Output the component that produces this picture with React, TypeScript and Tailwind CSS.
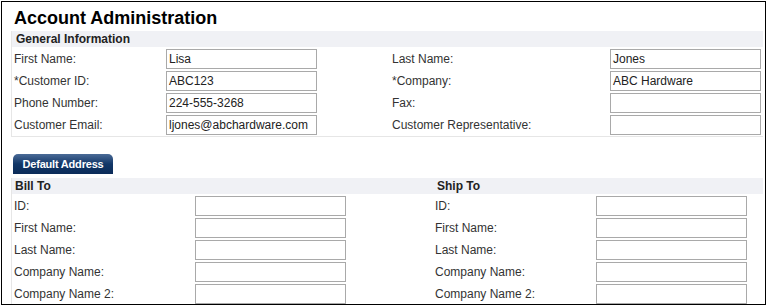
const general = [
  { l: 'First Name:', v: 'Lisa', rl: 'Last Name:', rv: 'Jones' },
  { l: '*Customer ID:', v: 'ABC123', rl: '*Company:', rv: 'ABC Hardware' },
  { l: 'Phone Number:', v: '224-555-3268', rl: 'Fax:', rv: '' },
  { l: 'Customer Email:', v: 'ljones@abchardware.com', rl: 'Customer Representative:', rv: '' },
];

const addressFields = ['ID:', 'First Name:', 'Last Name:', 'Company Name:', 'Company Name 2:'];

function Field({ value }: { value: string }) {
  return (
    <div className="h-[20px] w-[151px] border border-[#a9a9a9] bg-white pl-[2px] text-[12px] leading-[18px] text-[#222]">
      {value}
    </div>
  );
}

export default function App() {
  return (
    <div
      className="w-[768px] h-[308px] bg-white pt-[1px] pl-[1px] text-[#333]"
      style={{ fontFamily: '"Liberation Sans", Arial, sans-serif' }}
    >
      <div className="w-[765px] h-[304px] border border-black overflow-hidden pl-[9px] pt-[5px]">
        <h1 className="pl-[3px] text-[18px] leading-[22px] font-bold text-black">Account Administration</h1>

        {/* General information */}
        <div className="mt-[2px] w-[752px] border-l border-b border-[#e6e6e6]">
          <div className="h-[16px] bg-[#f0f1f5] pl-[4px] text-[12px] leading-[16px] font-bold text-[#222]">
            General Information
          </div>
          <div className="flex flex-col gap-[2px] pt-[2px] pb-[1px]">
            {general.map((r) => (
              <div key={r.l} className="flex items-center text-[12px]">
                <span className="w-[154px] pl-[2px]">{r.l}</span>
                <Field value={r.v} />
                <span className="w-[293px] pl-[75px]">{r.rl}</span>
                <Field value={r.rv} />
              </div>
            ))}
          </div>
        </div>

        {/* Default address tab */}
        <div className="mt-[17px] ml-[2px] h-[20px] w-[100px] rounded-t-[5px] bg-gradient-to-b from-[#4a6b97] via-[#123768] to-[#0b2b58] text-center text-[11px] leading-[21px] font-bold text-white tracking-[-0.2px]">
          Default Address
        </div>

        <div className="mt-[4px] w-[752px] border-l border-[#e6e6e6]">
          <div className="flex h-[16px] bg-[#f0f1f5] text-[12px] leading-[16px] font-bold text-[#222]">
            <span className="w-[425px] pl-[3px]">Bill To</span>
            <span>Ship To</span>
          </div>
          <div className="flex flex-col gap-[2px] pt-[2px]">
            {addressFields.map((f) => (
              <div key={f} className="flex items-center text-[12px]">
                <span className="w-[183px] pl-[2px]">{f}</span>
                <Field value="" />
                <span className="w-[250px] pl-[89px]">{f}</span>
                <Field value="" />
              </div>
            ))}
          </div>
        </div>
      </div>
    </div>
  );
}
